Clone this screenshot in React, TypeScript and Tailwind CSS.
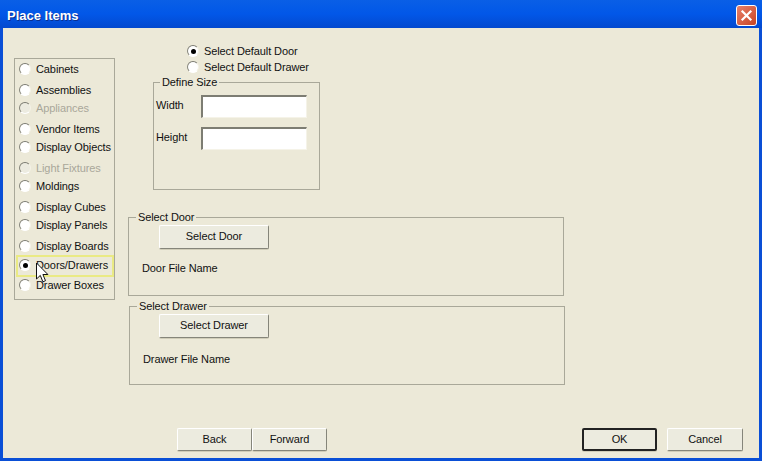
const items = [
  { label: 'Cabinets', gap: 'mt-[1px]' },
  { label: 'Assemblies', gap: 'mt-[3px]' },
  { label: 'Appliances', gap: '', disabled: true },
  { label: 'Vendor Items', gap: 'mt-[3px]' },
  { label: 'Display Objects', gap: '' },
  { label: 'Light Fixtures', gap: 'mt-[3px]', disabled: true },
  { label: 'Moldings', gap: '' },
  { label: 'Display Cubes', gap: 'mt-[3px]' },
  { label: 'Display Panels', gap: '' },
  { label: 'Display Boards', gap: 'mt-[3px]' },
  { label: 'Doors/Drawers', gap: '', checked: true },
  { label: 'Drawer Boxes', gap: 'mt-[3px]' },
];

function Radio({ checked, disabled }: { checked?: boolean; disabled?: boolean }) {
  return (
    <span
      className={`flex h-[12px] w-[12px] shrink-0 items-center justify-center rounded-full border border-b-[#ffffff] border-r-[#f4f2e6] border-l-[#85857a] border-t-[#7a7a70] ${
        disabled ? 'bg-[#ecebe0]' : 'bg-white'
      }`}
    >
      {checked && <span className="h-[5px] w-[5px] rounded-full bg-black" />}
    </span>
  );
}

function Button({ label, className }: { label: string; className: string }) {
  return (
    <button
      className={`flex items-center justify-center rounded-[2px] border border-t-white border-l-white border-b-[#85857a] border-r-[#85857a] bg-[#ecebdf] text-[#111] shadow-[0_1px_0_#d0cdb9] ${className}`}
    >
      {label}
    </button>
  );
}

function SizeInput() {
  return <div className="h-[23px] w-[106px] border border-t-2 border-l-2 border-t-[#7d7d73] border-l-[#7d7d73] border-b-[#f5f3e8] border-r-[#f5f3e8] bg-white" />;
}

export default function App() {
  return (
    <div className="flex h-[461px] w-[762px] flex-col overflow-hidden bg-[#0a4fd6] font-['Liberation_Sans',sans-serif] text-[11px] tracking-[-0.1px] text-[#111]">
      {/* Title bar */}
      <div className="flex h-[28px] shrink-0 items-center justify-between bg-gradient-to-b from-[#0a5fe6] via-[#0257e8] to-[#0349cf] pl-[7px] pr-[5px] pt-[3px]">
        <span className="text-[13px] font-bold tracking-normal text-white [text-shadow:1px_1px_0_#0a2f90]">Place Items</span>
        <div className="flex h-[21px] w-[21px] items-center justify-center rounded-[3px] border border-white bg-gradient-to-br from-[#e8806a] to-[#c8431f]">
          <svg width="13" height="13" viewBox="0 0 13 13">
            <path d="M2.5 2.5l8 8M10.5 2.5l-8 8" stroke="#fff" strokeWidth="2.2" strokeLinecap="square" />
          </svg>
        </div>
      </div>

      {/* Client area */}
      <div className="relative mx-[3px] mb-[3px] flex min-h-0 flex-1 flex-col bg-[#ece9d8]">
        <div className="flex flex-1">
          {/* Item type list */}
          <div className="ml-[11px] mt-[30px] h-[242px] w-[101px] shrink-0 border border-[#a9a899]">
            {items.map((item) =>
              item.checked ? (
                <div
                  key={item.label}
                  className="-mb-[4px] ml-px flex h-[22px] items-center border-2 border-[#eaea84] pb-[2px] pl-[1px]"
                >
                  <Radio checked />
                  <span className="ml-[5px] whitespace-nowrap">{item.label}</span>
                </div>
              ) : (
                <div
                  key={item.label}
                  className={`flex h-[18px] items-center pl-[4px] ${item.gap} ${item.disabled ? 'text-[#a9a79a]' : ''}`}
                >
                  <Radio disabled={item.disabled} />
                  <span className="ml-[5px] whitespace-nowrap">{item.label}</span>
                </div>
              ),
            )}
          </div>

          {/* Door and drawer settings */}
          <div className="ml-[13px] flex w-[437px] flex-col">
            <div className="ml-[59px] mt-[15px] flex flex-col">
              <div className="flex h-[16px] items-center">
                <Radio checked />
                <span className="ml-[5px]">Select Default Door</span>
              </div>
              <div className="flex h-[16px] items-center">
                <Radio />
                <span className="ml-[5px]">Select Default Drawer</span>
              </div>
            </div>

            <fieldset className="ml-[25px] h-[115px] w-[167px] border border-[#a9a899] pl-[2px]">
              <legend className="ml-[4px] px-[2px] leading-[14px]">Define Size</legend>
              <div className="mt-[6px] flex items-center">
                <span className="-mt-[3px] w-[45px]">Width</span>
                <SizeInput />
              </div>
              <div className="mt-[9px] flex items-center">
                <span className="-mt-[2px] w-[45px]">Height</span>
                <SizeInput />
              </div>
            </fieldset>

            <fieldset className="mt-[20px] h-[86px] w-[436px] border border-[#a9a899]">
              <legend className="ml-[7px] px-[2px] leading-[14px]">Select Door</legend>
              <Button label="Select Door" className="ml-[30px] mt-px h-[24px] w-[110px] pb-[2px]" />
              <div className="ml-[13px] mt-[11px]">Door File Name</div>
            </fieldset>

            <fieldset className="ml-px mt-[3px] h-[86px] w-[436px] border border-[#a9a899]">
              <legend className="ml-[7px] px-[2px] leading-[14px]">Select Drawer</legend>
              <Button label="Select Drawer" className="ml-[29px] mt-px h-[24px] w-[110px] pb-[2px]" />
              <div className="ml-[13px] mt-[13px]">Drawer File Name</div>
            </fieldset>
          </div>
        </div>

        {/* Footer buttons */}
        <div className="mb-[7px] flex h-[23px] items-center">
          <Button label="Back" className="ml-[174px] h-[23px] w-[75px]" />
          <Button label="Forward" className="h-[23px] w-[75px]" />
          <Button label="OK" className="ml-[255px] h-[23px] w-[75px] !border-2 !border-[#222]" />
          <Button label="Cancel" className="ml-[10px] h-[23px] w-[76px]" />
        </div>

        {/* Mouse cursor */}
        <svg className="absolute left-[32px] top-[234px]" width="14" height="22" viewBox="0 0 14 22">
          <path d="M1.5 1v16l3.8-3.6 2.6 6.4 2.6-1.1-2.6-6.2h5z" fill="#fff" stroke="#111" strokeWidth="1" />
        </svg>
      </div>
    </div>
  );
}
